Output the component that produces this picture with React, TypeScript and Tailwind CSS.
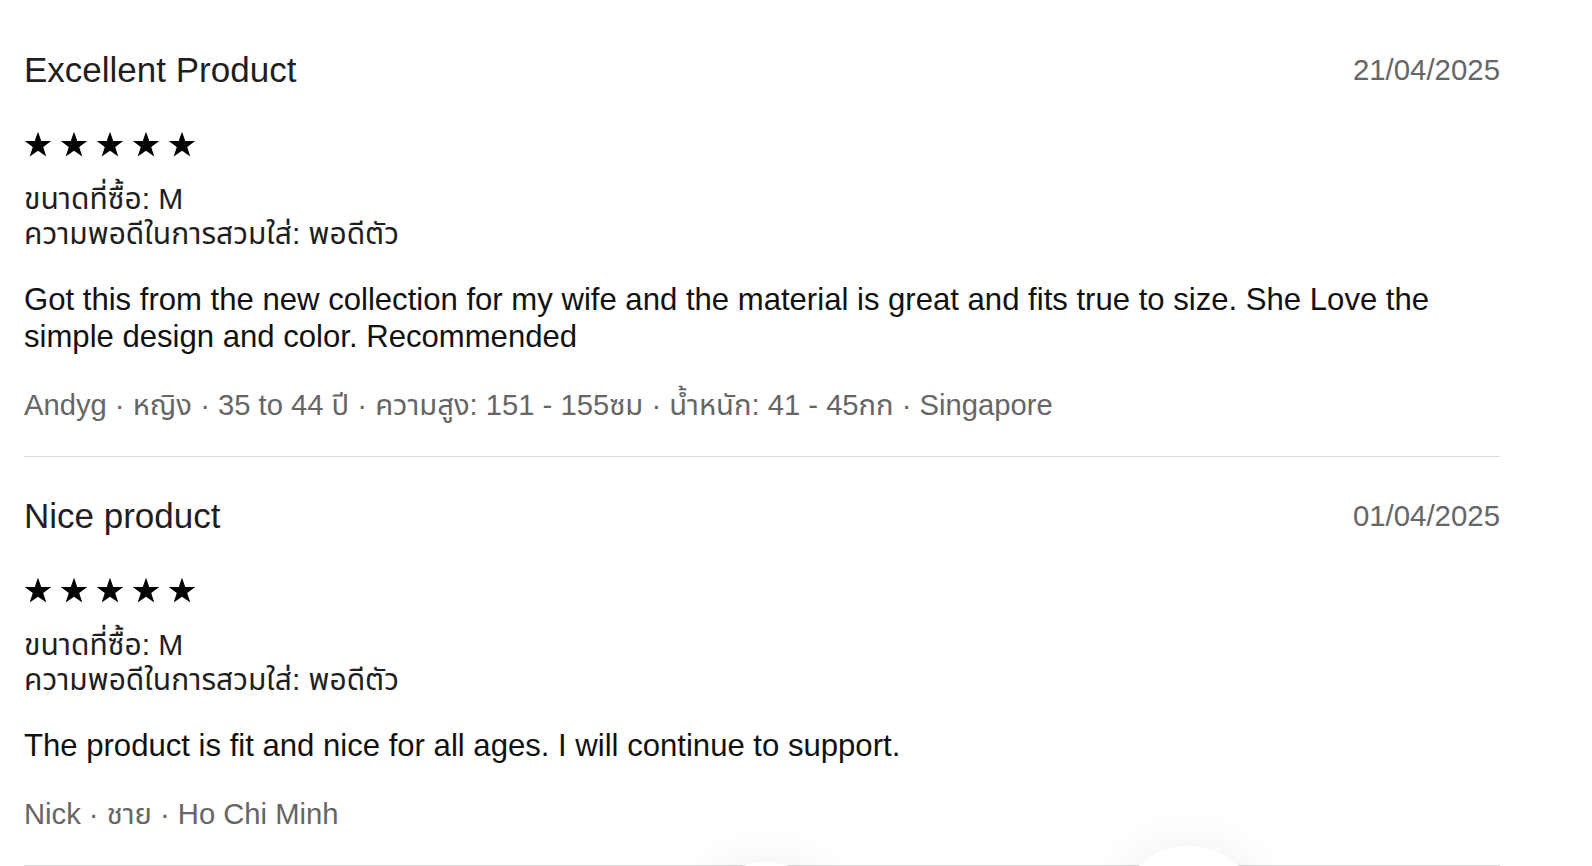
const FONT = "font-['Liberation_Sans','Noto_Sans','Noto_Sans_Thai',Arial,sans-serif]";

type Review = {
  title: string;
  date: string;
  size: string;
  fit: string;
  body: string;
  meta: string;
};

const REVIEWS: Review[] = [
  {
    title: 'Excellent Product',
    date: '21/04/2025',
    size: 'ขนาดที่ซื้อ: M',
    fit: 'ความพอดีในการสวมใส่: พอดีตัว',
    body: 'Got this from the new collection for my wife and the material is great and fits true to size. She Love the simple design and color. Recommended',
    meta: 'Andyg · หญิง · 35 to 44 ปี · ความสูง: 151 - 155ซม · น้ำหนัก: 41 - 45กก · Singapore',
  },
  {
    title: 'Nice product',
    date: '01/04/2025',
    size: 'ขนาดที่ซื้อ: M',
    fit: 'ความพอดีในการสวมใส่: พอดีตัว',
    body: 'The product is fit and nice for all ages. I will continue to support.',
    meta: 'Nick · ชาย · Ho Chi Minh',
  },
];

function Stars() {
  return (
    <div className="mt-[34px] flex h-[40px] items-center gap-[8px]">
      {[0, 1, 2, 3, 4].map((i) => (
        <svg key={i} width="28" height="27" viewBox="0 0 24 23" className="block">
          <path
            d="M12 0.5l2.82 8.1h8.55l-6.9 5.05 2.63 8.15L12 16.75l-7.1 5.05 2.63-8.15-6.9-5.05h8.55z"
            fill="#000"
          />
        </svg>
      ))}
    </div>
  );
}

function ReviewItem({ review }: { review: Review }) {
  return (
    <div className="pt-[39px] pb-[33px] border-b border-[#d9d9d9]">
      {/* Title + date */}
      <div className="flex h-[40px] items-center justify-between">
        <h3 className="text-[35px] leading-[40px] text-[#1f1f1f]">{review.title}</h3>
        <span className="text-[29.4px] leading-[40px] text-[#666]">{review.date}</span>
      </div>

      <Stars />

      {/* Size / fit */}
      <div className="mt-[18px] text-[30px] leading-[34.5px] text-[#1f1f1f]">
        <p>{review.size}</p>
        <p>{review.fit}</p>
      </div>

      <p className="mt-[30px] text-[31.1px] leading-[37px] text-[#111]">{review.body}</p>

      <p className="mt-[32px] text-[29.2px] leading-[36px] text-[#666]">{review.meta}</p>
    </div>
  );
}

export default function App() {
  return (
    <div className={`${FONT} relative h-[866px] overflow-hidden bg-white`}>
      <div className="pl-6 pt-[11px] w-[1500px]">
        {REVIEWS.map((r) => (
          <ReviewItem key={r.title} review={r} />
        ))}
      </div>

      {/* floating buttons peeking from the bottom */}
      <div className="absolute left-[694px] top-[862px] h-[144px] w-[144px] rounded-full bg-white shadow-[0_0_45px_rgba(0,0,0,0.07)]" />
      <div className="absolute left-[1116px] top-[846px] h-[145px] w-[145px] rounded-full bg-white shadow-[0_0_45px_rgba(0,0,0,0.07)]" />
    </div>
  );
}
